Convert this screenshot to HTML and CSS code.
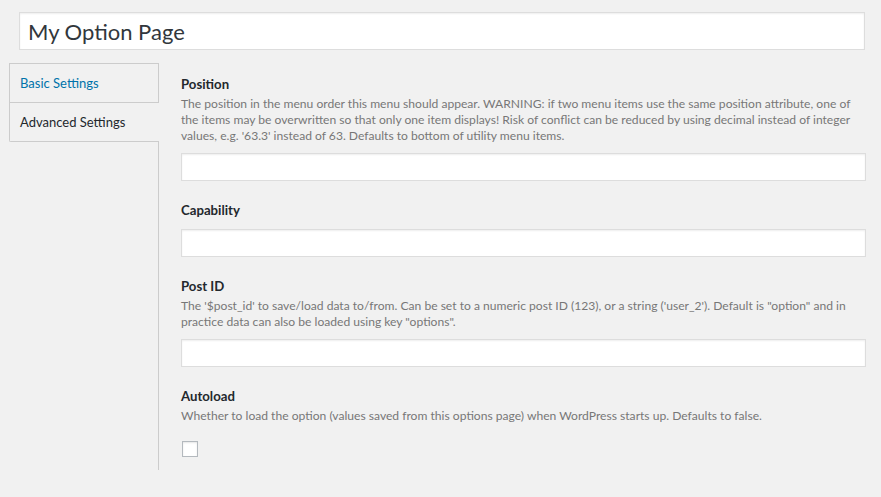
FILE: index.html
```html
<!DOCTYPE html>
<html>
<head>
<meta charset="utf-8">
<link rel="stylesheet" href="styles.css">
</head>
<body>
<div class="page">
  <div class="title-wrap"><input class="title" type="text" value="My Option Page"></div>
  <div class="layout">
    <ul class="tabs">
      <li class="tab"><a href="#">Basic Settings</a></li>
      <li class="tab active"><a href="#">Advanced Settings</a></li>
    </ul>
    <div class="fields">
      <div class="field">
        <label class="label">Position</label>
        <p class="desc">The position in the menu order this menu should appear. WARNING: if two menu items use the same position attribute, one of the items may be overwritten so that only one item displays! Risk of conflict can be reduced by using decimal instead of integer values, e.g. '63.3' instead of 63. Defaults to bottom of utility menu items.</p>
        <input class="text" type="text">
      </div>
      <div class="field">
        <label class="label">Capability</label>
        <input class="text" type="text">
      </div>
      <div class="field">
        <label class="label">Post ID</label>
        <p class="desc">The '$post_id' to save/load data to/from. Can be set to a numeric post ID (123), or a string ('user_2'). Default is "option" and in practice data can also be loaded using key "options".</p>
        <input class="text" type="text">
      </div>
      <div class="field">
        <label class="label">Autoload</label>
        <p class="desc">Whether to load the option (values saved from this options page) when WordPress starts up. Defaults to false.</p>
        <input class="check" type="checkbox">
      </div>
    </div>
  </div>
</div>
</body>
</html>
```

FILE: styles.css
```css
html, body {
  margin: 0;
  padding: 0;
  background: #f1f1f1;
}
body {
  font-family: Lato, "Liberation Sans", sans-serif;
  color: #444;
  font-size: 13px;
}
.page {
  padding: 12px 15px 0 9px;
}
.title-wrap {
  padding: 0 1px 0 10px;
}
.title {
  display: block;
  box-sizing: border-box;
  width: 100%;
  height: 38px;
  margin: 0;
  padding: 0 8px;
  border: 1px solid #ddd;
  background: #fff;
  box-shadow: inset 0 1px 2px rgba(0,0,0,.07);
  font-family: inherit;
  font-size: 22px;
  color: #32373c;
  outline: none;
}
.layout {
  display: flex;
  margin-top: 13px;
}
.tabs {
  list-style: none;
  margin: 0;
  padding: 0;
  width: 149px;
  flex: none;
}
.tab {
  box-sizing: border-box;
  height: 40px;
  border: 1px solid #ccc;
  border-right: none;
  display: flex;
  align-items: center;
  padding-left: 10px;
}
.tab + .tab {
  margin-top: -1px;
}
.tab a {
  color: #0073aa;
  text-decoration: none;
  font-size: 13px;
}
.tab.active {
  background: #f1f1f1;
  margin-right: -1px;
  position: relative;
  z-index: 1;
  border-bottom-left-radius: 2px;
}
.tab.active a {
  color: #23282d;
}
.fields {
  flex: 1;
  border-left: 1px solid #ccc;
  padding: 11px 0 13px 22px;
}
.field + .field {
  margin-top: 19px;
}
.label {
  display: block;
  font-weight: bold;
  font-size: 13.2px;
  line-height: 20px;
  color: #23282d;
}
.desc {
  margin: 2px 0 0;
  font-size: 12.1px;
  line-height: 16px;
  color: #777;
}
.text {
  display: block;
  box-sizing: border-box;
  width: 100%;
  height: 28px;
  margin: 9px 0 0;
  border: 1px solid #ddd;
  background: #fff;
  box-shadow: inset 0 1px 2px rgba(0,0,0,.07);
  outline: none;
}
.check {
  -webkit-appearance: none;
  appearance: none;
  display: block;
  box-sizing: border-box;
  width: 16px;
  height: 16px;
  margin: 17px 0 0 1px;
  border: 1px solid #b4b9be;
  background: #fff;
  box-shadow: inset 0 1px 2px rgba(0,0,0,.1);
  border-radius: 0;
}
```
